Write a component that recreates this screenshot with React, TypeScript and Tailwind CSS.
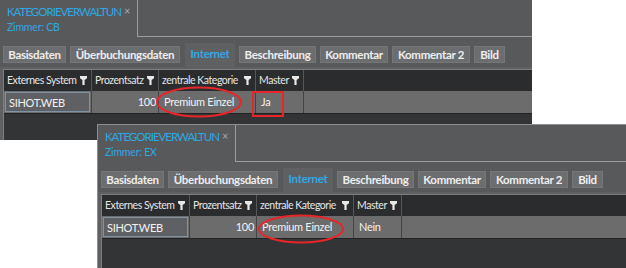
import React from "react";

const font = { fontFamily: "Lato, 'Open Sans', sans-serif" };

function Filter() {
  return (
    <svg width="7" height="9" viewBox="0 0 7 9" className="shrink-0">
      <path d="M0 0H7V2.2L4.6 4V9H2.4V4L0 2.2Z" fill="#e8e8e8" />
    </svg>
  );
}

const tabs: { label: string; w: string; active?: boolean }[] = [
  { label: "Basisdaten", w: "w-[63px]" },
  { label: "Überbuchungsdaten", w: "w-[110px]" },
  { label: "Internet", w: "w-[50px]", active: true },
  { label: "Beschreibung", w: "w-[77px]" },
  { label: "Kommentar", w: "w-[68px]" },
  { label: "Kommentar 2", w: "w-[78px]" },
  { label: "Bild", w: "w-[31px]" },
];

function Win({ sub, master, className }: { sub: string; master: string; className: string }) {
  return (
    <div className={`absolute flex flex-col overflow-hidden bg-[#58595b] ${className}`} style={font}>
      <div className="flex h-[37px] shrink-0">
        <div className="flex w-[138px] shrink-0 items-start border-r border-[#9c9d9f] pl-[7px] pt-[5px]">
          <div className="flex w-[114px] flex-col">
            <div className="whitespace-nowrap text-[11.5px] leading-[13px] text-[#2ea8e2] tracking-[-1px]">
              KATEGORIEVERWALTUN
            </div>
            <div className="mt-[4px] text-[10.5px] leading-[11px] text-[#2ea8e2] tracking-[-0.2px]">{sub}</div>
          </div>
          <span className="ml-[3px] mt-[0px] text-[11px] leading-[12px] text-[#a9aaac]">×</span>
        </div>
        <div className="flex-1 border-b border-[#9c9d9f]" />
      </div>
      <div className="mt-[6px] flex h-[24px] shrink-0 gap-[4px] pl-[3px]">
        {tabs.map((t) =>
          t.active ? (
            <div
              key={t.label}
              className={`${t.w} ml-[1px] h-[24px] bg-[#5f6062] pt-[4px] text-center text-[11.5px] font-bold leading-[14px] text-[#2ea8e2] tracking-[-0.3px]`}
            >
              {t.label}
            </div>
          ) : (
            <div
              key={t.label}
              className={`${t.w} mt-[3px] h-[17px] bg-[#6c6d6f] border border-[#757678] pt-[1px] text-center text-[11.5px] font-bold leading-[14px] text-[#eeeeee] tracking-[-0.3px] whitespace-nowrap`}
            >
              {t.label}
            </div>
          )
        )}
      </div>
      <div className="flex flex-1 flex-col bg-[#5f6062] pt-[2px] pl-[3px]">
        <div className="flex flex-1 flex-col border-l border-t border-[#7d7e80] bg-[#333435]">
          <div className="flex h-[21px] shrink-0 bg-[#2b2c2e] text-[10.5px] leading-[21px] text-[#e6e6e6] tracking-[-0.45px]">
            {[
              ["Externes System", "w-[88px]"],
              ["Prozentsatz", "w-[67px]"],
              ["zentrale Kategorie", "w-[97px]"],
              ["Master", "w-[48px]"],
            ].map(([l, w]) => (
              <div key={l} className={`${w} flex items-center justify-between border-r border-[#56575a] pl-[3px] pr-[4px]`}>
                <span className="whitespace-nowrap">{l}</span>
                <Filter />
              </div>
            ))}
            <div className="flex-1" />
          </div>
          <div className="flex h-[23px] shrink-0 border-b border-[#222] bg-[#6c6c6c] text-[11px] leading-[21px] text-[#f2f2f2] tracking-[-0.3px]">
            <div className="w-[88px] border-r border-[#444] p-[1px]">
              <div className="h-full border border-[#7e93a3] bg-[#5e6063] pl-[3px] leading-[19px]">SIHOT.WEB</div>
            </div>
            <div className="w-[67px] border-r border-[#444] pr-[2px] text-right">100</div>
            <div className="w-[97px] border-r border-[#444] pl-[5px]">Premium Einzel</div>
            <div className="w-[48px] border-r border-[#444] pl-[5px]">{master}</div>
            <div className="flex-1" />
          </div>
        </div>
      </div>
    </div>
  );
}

export default function App() {
  return (
    <div className="relative h-[268px] w-[626px] overflow-hidden bg-white">
      <Win sub="Zimmer: CB" master="Ja" className="left-0 top-0 w-[532px] h-[140px]" />
      <Win
        sub="Zimmer: EX"
        master="Nein"
        className="left-[97px] top-[124px] w-[529px] h-[160px] border-l border-t border-[#8d8e90]"
      />
      <svg className="absolute left-0 top-0" width="626" height="268">
        <ellipse cx="199" cy="102" rx="42" ry="14.5" fill="none" stroke="#e8262a" strokeWidth="2" />
        <rect x="253" y="92" width="30" height="24" fill="none" stroke="#e8262a" strokeWidth="2" />
        <ellipse cx="301" cy="229" rx="42" ry="13.5" fill="none" stroke="#e8262a" strokeWidth="2" />
      </svg>
    </div>
  );
}
